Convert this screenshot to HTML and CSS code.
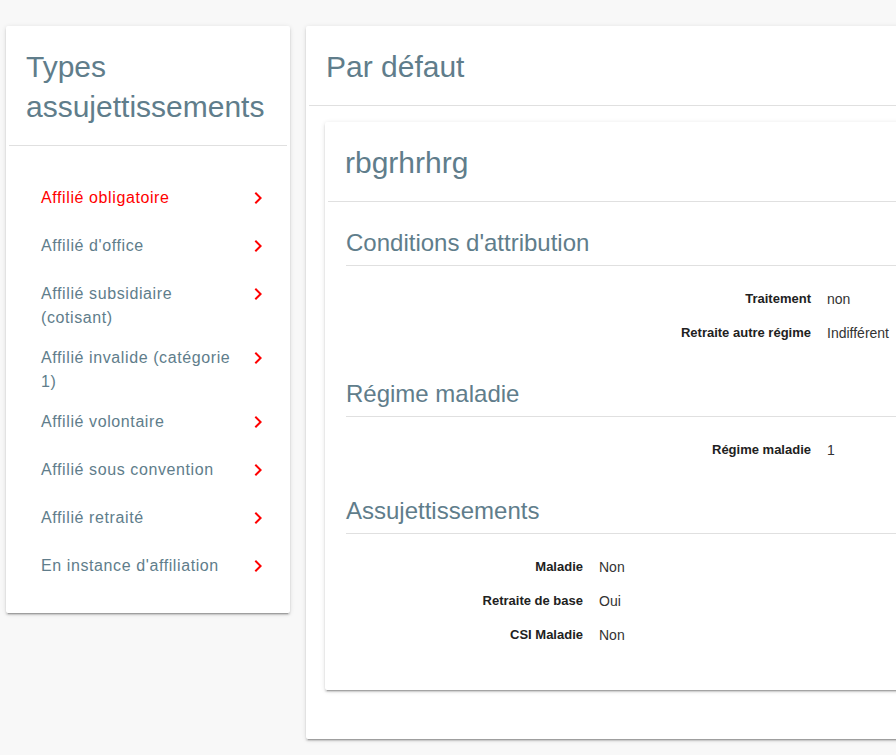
FILE: index.html
```html
<!DOCTYPE html>
<html lang="fr">
<head>
<meta charset="utf-8">
<title>Types assujettissements</title>
<link rel="stylesheet" href="styles.css">
</head>
<body>
<div class="page">
  <aside class="card side">
    <h2 class="card-title">Types assujettissements</h2>
    <ul class="menu">
      <li class="menu-item active"><span class="menu-text">Affilié obligatoire</span><svg class="chev" viewBox="0 0 24 24"><path d="M10 6L8.59 7.41 13.17 12l-4.58 4.59L10 18l6-6z"/></svg></li>
      <li class="menu-item"><span class="menu-text">Affilié d'office</span><svg class="chev" viewBox="0 0 24 24"><path d="M10 6L8.59 7.41 13.17 12l-4.58 4.59L10 18l6-6z"/></svg></li>
      <li class="menu-item"><span class="menu-text">Affilié subsidiaire (cotisant)</span><svg class="chev" viewBox="0 0 24 24"><path d="M10 6L8.59 7.41 13.17 12l-4.58 4.59L10 18l6-6z"/></svg></li>
      <li class="menu-item"><span class="menu-text">Affilié invalide (catégorie 1)</span><svg class="chev" viewBox="0 0 24 24"><path d="M10 6L8.59 7.41 13.17 12l-4.58 4.59L10 18l6-6z"/></svg></li>
      <li class="menu-item"><span class="menu-text">Affilié volontaire</span><svg class="chev" viewBox="0 0 24 24"><path d="M10 6L8.59 7.41 13.17 12l-4.58 4.59L10 18l6-6z"/></svg></li>
      <li class="menu-item"><span class="menu-text">Affilié sous convention</span><svg class="chev" viewBox="0 0 24 24"><path d="M10 6L8.59 7.41 13.17 12l-4.58 4.59L10 18l6-6z"/></svg></li>
      <li class="menu-item"><span class="menu-text">Affilié retraité</span><svg class="chev" viewBox="0 0 24 24"><path d="M10 6L8.59 7.41 13.17 12l-4.58 4.59L10 18l6-6z"/></svg></li>
      <li class="menu-item"><span class="menu-text">En instance d'affiliation</span><svg class="chev" viewBox="0 0 24 24"><path d="M10 6L8.59 7.41 13.17 12l-4.58 4.59L10 18l6-6z"/></svg></li>
    </ul>
  </aside>
  <main class="card main">
    <h2 class="card-title">Par défaut</h2>
    <div class="main-body">
      <section class="card inner">
        <h2 class="card-title">rbgrhrhrg</h2>
        <div class="sections">
          <h3 class="section-title">Conditions d'attribution</h3>
          <dl class="props">
            <div class="prop"><dt>Traitement</dt><dd>non</dd></div>
            <div class="prop"><dt>Retraite autre régime</dt><dd>Indifférent</dd></div>
          </dl>
          <h3 class="section-title">Régime maladie</h3>
          <dl class="props">
            <div class="prop"><dt>Régime maladie</dt><dd>1</dd></div>
          </dl>
          <h3 class="section-title">Assujettissements</h3>
          <dl class="props props-narrow">
            <div class="prop"><dt>Maladie</dt><dd>Non</dd></div>
            <div class="prop"><dt>Retraite de base</dt><dd>Oui</dd></div>
            <div class="prop"><dt>CSI Maladie</dt><dd>Non</dd></div>
          </dl>
        </div>
      </section>
    </div>
  </main>
</div>
</body>
</html>
```
FILE: styles.css
```css
html, body {
  margin: 0;
  padding: 0;
}
body {
  background: #f8f8f8;
  font-family: "Liberation Sans", Arial, sans-serif;
  overflow: hidden;
  height: 755px;
}
.page {
  display: flex;
  align-items: flex-start;
  gap: 16px;
  padding: 26px 0 0 6px;
}
.card {
  background: #fff;
  border-radius: 2px;
  box-shadow: 0 2px 2px 0 rgba(0,0,0,.14), 0 3px 1px -2px rgba(0,0,0,.2), 0 1px 5px 0 rgba(0,0,0,.12);
}
.card-title {
  margin: 0 3px;
  padding: 21px 17px 18px;
  font-size: 30px;
  line-height: 40px;
  font-weight: 400;
  color: #607d8b;
  border-bottom: 1px solid #e0e0e0;
}
.side {
  width: 284px;
  flex: none;
}
.menu {
  list-style: none;
  margin: 0;
  padding: 28px 0 23px;
}
.menu-item {
  display: flex;
  align-items: flex-start;
  box-sizing: border-box;
  min-height: 48px;
  padding: 12px 20px 4px 35px;
  font-size: 16px;
  line-height: 24px;
  letter-spacing: 0.6px;
  color: #607d8b;
}
.menu-item.active {
  color: #ff0000;
}
.menu-text {
  flex: 1;
  padding-right: 6px;
}
.chev {
  width: 24px;
  height: 24px;
  flex: none;
  fill: #ff0000;
}
.main {
  width: 620px;
  flex: none;
}
.main-body {
  padding: 16px 19px 49px;
}
.inner {
  padding-bottom: 35px;
}
.sections {
  padding-left: 21px;
}
.section-title {
  margin: 25px 0 0;
  padding-bottom: 6px;
  font-size: 24px;
  line-height: 32px;
  font-weight: 400;
  color: #607d8b;
  border-bottom: 1px solid #e0e0e0;
}
.props {
  margin: 0;
  padding: 16px 0 3px;
}
.prop {
  display: grid;
  grid-template-columns: 465px 1fr;
  column-gap: 16px;
  line-height: 34px;
}
.props-narrow .prop {
  grid-template-columns: 237px 1fr;
}
.prop dt {
  text-align: right;
  font-size: 13px;
  font-weight: 700;
  color: #212121;
}
.prop dd {
  margin: 0;
  font-size: 14px;
  color: #333;
}
```
